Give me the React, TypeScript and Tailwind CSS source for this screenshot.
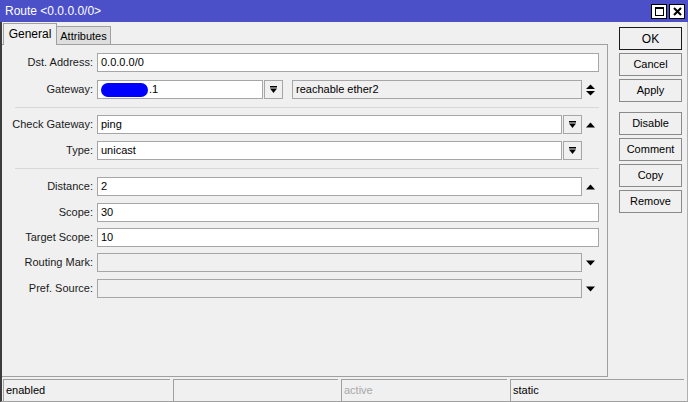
import React from "react";

// ---------------------------------------------------------------------------
// Small glyphs
// ---------------------------------------------------------------------------

function DropIcon() {
  return (
    <svg width="9" height="9" viewBox="0 0 9 9" aria-hidden="true">
      <rect x="1" y="1" width="7" height="1.5" fill="#000" />
      <polygon points="1,3.5 8,3.5 4.5,8" fill="#000" />
    </svg>
  );
}

function UpTri() {
  return (
    <svg width="9" height="6" viewBox="0 0 9 6" aria-hidden="true">
      <polygon points="0,5.5 9,5.5 4.5,0.5" fill="#000" />
    </svg>
  );
}

function DownTri() {
  return (
    <svg width="9" height="6" viewBox="0 0 9 6" aria-hidden="true">
      <polygon points="0,0.5 9,0.5 4.5,5.5" fill="#000" />
    </svg>
  );
}

function UpDown() {
  return (
    <svg width="9" height="12" viewBox="0 0 9 12" aria-hidden="true">
      <polygon points="0,5 9,5 4.5,0.5" fill="#000" />
      <polygon points="0,7 9,7 4.5,11.5" fill="#000" />
    </svg>
  );
}

// ---------------------------------------------------------------------------
// Field pieces
// ---------------------------------------------------------------------------

function Label({ text }: { text: string }) {
  return (
    <div className="w-[91px] shrink-0 text-right text-[#1a1a1a]">{text}</div>
  );
}

function Input({
  value,
  disabled = false,
  className = "",
  children,
}: {
  value?: string;
  disabled?: boolean;
  className?: string;
  children?: React.ReactNode;
}) {
  return (
    <div
      className={[
        "h-full flex items-center border border-[#a6a6a6] pl-[3px] overflow-hidden whitespace-nowrap",
        disabled ? "bg-[#f0f0f0]" : "bg-white",
        className,
      ].join(" ")}
    >
      {children ?? value}
    </div>
  );
}

function DropButton() {
  return (
    <div className="ml-px h-full w-[19px] shrink-0 flex items-center justify-center border border-[#a6a6a6] bg-[#f0f0f0]">
      <DropIcon />
    </div>
  );
}

function Arrow({ children }: { children?: React.ReactNode }) {
  return (
    <div className="w-[17px] h-full shrink-0 flex items-center justify-center">
      {children}
    </div>
  );
}

function Row({
  label,
  mt,
  children,
}: {
  label: string;
  mt: string;
  children: React.ReactNode;
}) {
  return (
    <div className={["flex items-center h-[19px]", mt].join(" ")}>
      <Label text={label} />
      <div className="ml-[4px] flex-1 h-full flex items-center">{children}</div>
    </div>
  );
}

function SideButton({
  label,
  primary = false,
  className = "",
}: {
  label: string;
  primary?: boolean;
  className?: string;
}) {
  return (
    <div
      className={[
        "h-[23px] w-[63px] flex items-center justify-center bg-[#f0f0f0] text-[#000]",
        primary
          ? "border border-[#1a1a1a] shadow-[inset_0_0_0_1px_#f0f0f0]"
          : "border border-[#8a8a8a]",
        className,
      ].join(" ")}
    >
      {label}
    </div>
  );
}

function StatusCell({
  text,
  dim = false,
  className = "",
}: {
  text?: string;
  dim?: boolean;
  className?: string;
}) {
  return (
    <div
      className={[
        "h-full flex items-center pl-[2px] border-t border-l border-[#a0a0a0]",
        dim ? "text-[#a8a8a8]" : "text-black",
        className,
      ].join(" ")}
    >
      {text}
    </div>
  );
}

// ---------------------------------------------------------------------------
// App
// ---------------------------------------------------------------------------

export default function App() {
  return (
    <div
      className="w-[688px] h-[402px] bg-[#f0f0f0] flex flex-col overflow-hidden text-[11px] leading-none"
      style={{ fontFamily: '"Liberation Sans", Arial, sans-serif' }}
    >
      {/* Title bar */}
      <div className="h-[22px] shrink-0 bg-[#4b50c9] flex items-center pl-[5px] pr-[3px]">
        <span className="text-white text-[12px]">Route &lt;0.0.0.0/0&gt;</span>
        <div className="ml-auto flex items-center gap-[2px]">
          <div className="w-[16px] h-[15px] bg-white border border-black flex items-center justify-center">
            <div className="w-[9px] h-[9px] border border-black border-t-2" />
          </div>
          <div className="w-[16px] h-[15px] bg-white border border-black flex items-center justify-center">
            <svg width="9" height="9" viewBox="0 0 9 9" aria-hidden="true">
              <path d="M1 1 L8 8 M8 1 L1 8" stroke="#000" strokeWidth="2" />
            </svg>
          </div>
        </div>
      </div>

      {/* Body */}
      <div className="flex-1 flex flex-col border-l-2 border-[#3c3c3c] border-r border-r-[#b0b0b0] border-b border-b-[#a0a0a0]">
        <div className="flex-1 flex">
          {/* Tabs + panel */}
          <div className="w-[606px] shrink-0 flex flex-col">
            <div className="h-[22px] flex items-end pl-px">
              <div className="h-[22px] w-[54px] border border-b-0 border-[#a0a0a0] bg-[#f0f0f0] flex items-center justify-center pb-[2px] text-[12px] relative top-px z-10">
                General
              </div>
              <div className="h-[18px] w-[54px] border border-l-0 border-b-0 border-[#a0a0a0] bg-[#dedede] flex items-center justify-center pt-px">
                Attributes
              </div>
            </div>
            <div className="flex-1 border border-[#a0a0a0] border-l-0 flex flex-col pt-[8px] pr-[8px]">
              <Row label="Dst. Address:" mt="mt-0">
                <Input value="0.0.0.0/0" className="flex-1" />
              </Row>
              <Row label="Gateway:" mt="mt-[8px]">
                <Input className="w-[166px] shrink-0">
                  <span className="inline-block w-[47px] h-[14px] rounded-full bg-[#0000ff] mr-px" />
                  <span>.1</span>
                </Input>
                <DropButton />
                <Input value="reachable ether2" disabled className="flex-1 ml-[9px]" />
                <Arrow>
                  <UpDown />
                </Arrow>
              </Row>
              <div className="mt-[8px] ml-[13px] h-px bg-[#d8d8d8]" />
              <Row label="Check Gateway:" mt="mt-[7px]">
                <Input value="ping" className="flex-1" />
                <DropButton />
                <Arrow>
                  <UpTri />
                </Arrow>
              </Row>
              <Row label="Type:" mt="mt-[7px]">
                <Input value="unicast" className="flex-1" />
                <DropButton />
                <Arrow />
              </Row>
              <div className="mt-[8px] ml-[13px] h-px bg-[#d8d8d8]" />
              <Row label="Distance:" mt="mt-[8px]">
                <Input value="2" className="flex-1" />
                <Arrow>
                  <UpTri />
                </Arrow>
              </Row>
              <Row label="Scope:" mt="mt-[7px]">
                <Input value="30" className="flex-1" />
              </Row>
              <Row label="Target Scope:" mt="mt-[6px]">
                <Input value="10" className="flex-1" />
              </Row>
              <Row label="Routing Mark:" mt="mt-[6px]">
                <Input disabled className="flex-1" />
                <Arrow>
                  <DownTri />
                </Arrow>
              </Row>
              <Row label="Pref. Source:" mt="mt-[7px]">
                <Input disabled className="flex-1" />
                <Arrow>
                  <DownTri />
                </Arrow>
              </Row>
            </div>
          </div>

          {/* Side buttons */}
          <div className="ml-[11px] pt-[5px] flex flex-col gap-[3px]">
            <SideButton label="OK" primary className="text-[12px]" />
            <SideButton label="Cancel" />
            <SideButton label="Apply" />
            <SideButton label="Disable" className="mt-[7px]" />
            <SideButton label="Comment" />
            <SideButton label="Copy" />
            <SideButton label="Remove" />
          </div>
        </div>

        {/* Status bar */}
        <div className="h-[22px] shrink-0 mt-[2px] flex gap-[3px] pl-px pr-[3px]">
          <StatusCell text="enabled" className="w-[167px]" />
          <StatusCell className="w-[165px]" />
          <StatusCell text="active" dim className="w-[166px]" />
          <StatusCell text="static" className="flex-1" />
        </div>
      </div>
    </div>
  );
}
